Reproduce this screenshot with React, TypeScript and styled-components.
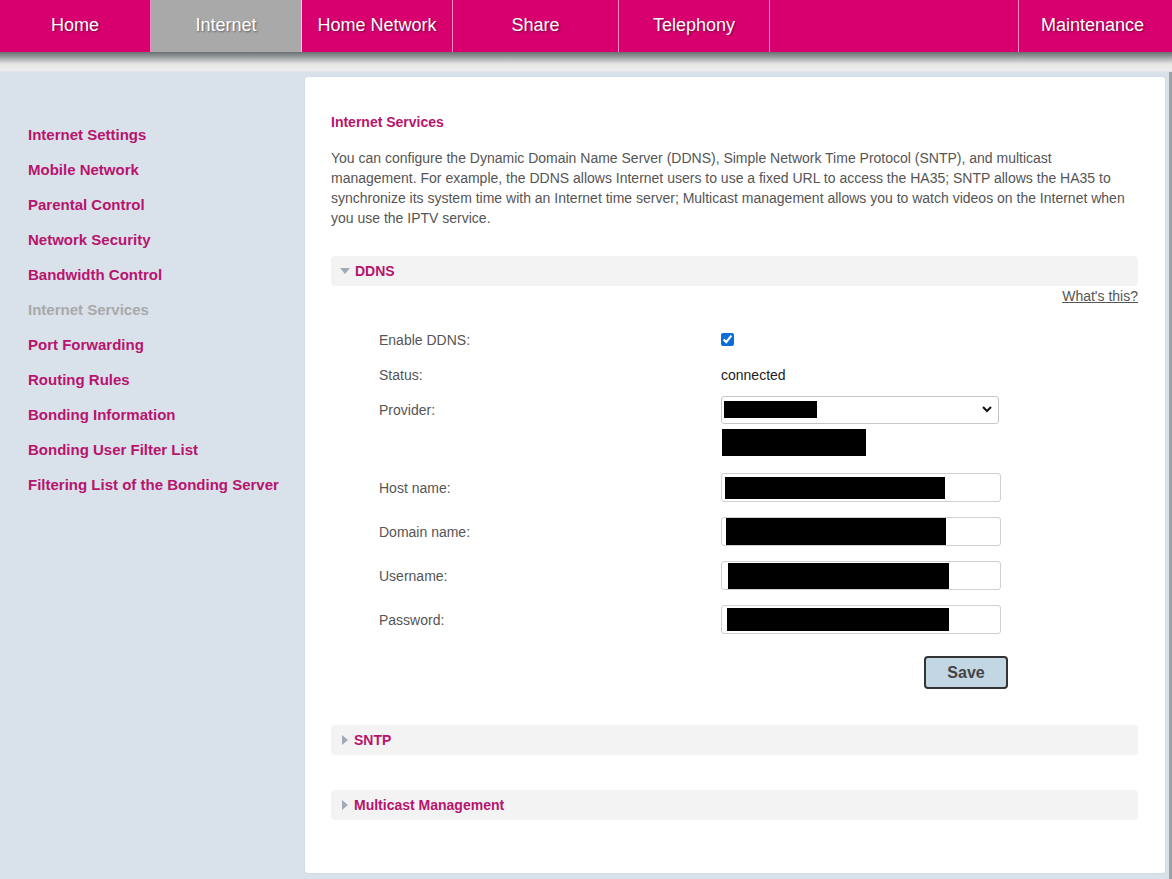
import React from "react";
import styled, { createGlobalStyle } from "styled-components";

const GlobalStyle = createGlobalStyle`
  html, body { margin: 0; padding: 0; }
  body {
    font-family: "Liberation Sans", Arial, sans-serif;
    background: #d9e1eb;
    width: 1172px;
    min-height: 879px;
    overflow: hidden;
  }
`;

const MAGENTA = "#d8006f";
const LINK = "#b8146d";

const Page = styled.div`
  width: 1172px;
  min-height: 879px;
  display: flex;
  flex-direction: column;
`;

const NavBar = styled.nav`
  display: flex;
  height: 52px;
  background: ${MAGENTA};
`;

const Tab = styled.div<{ $w?: number; $active?: boolean; $last?: boolean }>`
  ${(p) => (p.$w ? `width: ${p.$w}px;` : "flex: 1;")}
  flex-shrink: 0;
  display: flex;
  align-items: center;
  justify-content: center;
  color: #fff;
  font-size: 18px;
  text-shadow: 1px 1px 2px rgba(0, 0, 0, 0.45);
  background: ${(p) => (p.$active ? "#a9a9a9" : MAGENTA)};
  border-right: ${(p) => (p.$last ? "none" : "1px solid rgba(255,255,255,0.55)")};
  padding-bottom: 2px;
  padding-right: ${(p) => (p.$last ? 6 : 0)}px;
  box-sizing: border-box;
`;

const ShadowBand = styled.div`
  height: 20px;
  background: linear-gradient(
    #6a6f72 0px,
    #8f9497 4px,
    #c4c7c8 9px,
    #e6e6e6 12px,
    #ececec 18px,
    #dfe4ea 20px
  );
`;

const Body = styled.div`
  flex: 1;
  display: flex;
  border-right: 3px solid #9da2a8;
  padding: 5px 4px 6px 0;
`;

const Sidebar = styled.aside`
  width: 305px;
  flex-shrink: 0;
  padding: 40px 0 0 28px;
  box-sizing: border-box;
  display: flex;
  flex-direction: column;
`;

const SideLink = styled.a<{ $current?: boolean }>`
  font-size: 15px;
  font-weight: bold;
  line-height: 35px;
  color: ${(p) => (p.$current ? "#a9a9a9" : LINK)};
  text-decoration: none;
  white-space: nowrap;
`;

const Panel = styled.main`
  flex: 1;
  height: 796px;
  background: #fff;
  border-radius: 3px;
  box-shadow: 0 0 2px rgba(0, 0, 0, 0.08);
  padding: 37px 27px 0 26px;
  box-sizing: border-box;
  display: flex;
  flex-direction: column;
`;

const Title = styled.h1`
  margin: 0;
  font-size: 14px;
  line-height: 16px;
  font-weight: bold;
  color: ${LINK};
`;

const Intro = styled.p`
  margin: 18px 0 0;
  font-size: 14px;
  line-height: 20px;
  color: #555;
`;

const SectionBar = styled.div<{ $mt: number }>`
  margin-top: ${(p) => p.$mt}px;
  height: 30px;
  background: #f3f3f3;
  border-radius: 4px;
  display: flex;
  align-items: center;
  gap: 5px;
  padding-left: 9px;
  font-size: 14px;
  font-weight: bold;
  color: ${LINK};
`;

const Help = styled.a`
  align-self: flex-end;
  margin-top: 2px;
  font-size: 14px;
  line-height: 16px;
  color: #555;
  text-decoration: underline;
`;

const Form = styled.div`
  margin-top: 18px;
  display: flex;
  flex-direction: column;
`;

const Row = styled.div<{ $h: number; $mt?: number }>`
  display: grid;
  grid-template-columns: 342px 1fr;
  align-items: center;
  height: ${(p) => p.$h}px;
  margin-top: ${(p) => p.$mt || 0}px;
  padding-left: 48px;
  font-size: 14px;
  color: #555;
`;

const Label = styled.span`
  color: #555;
`;

const Value = styled.span`
  color: #222;
`;

const Check = styled.input`
  width: 13px;
  height: 13px;
  margin: 0;
  accent-color: #0b6ed8;
`;

const SelectBox = styled.div`
  width: 278px;
  height: 28px;
  border: 1px solid #c6c6c6;
  border-radius: 3px;
  box-sizing: border-box;
  display: flex;
  align-items: center;
  justify-content: space-between;
  padding: 0 6px 0 2px;
`;

const Redact = styled.span<{ $w: number; $h: number; $ml?: number }>`
  display: block;
  width: ${(p) => p.$w}px;
  height: ${(p) => p.$h}px;
  margin-left: ${(p) => p.$ml || 0}px;
  background: #000;
`;

const TextField = styled.div`
  width: 280px;
  height: 29px;
  border: 1px solid #cfcfcf;
  border-radius: 3px;
  box-sizing: border-box;
  display: flex;
  align-items: center;
`;

const ButtonCell = styled.div`
  width: 287px;
  display: flex;
  justify-content: flex-end;
`;

const SaveButton = styled.button`
  width: 84px;
  height: 33px;
  background: #c3d6e3;
  border: 2px solid #333;
  border-radius: 4px;
  font-family: "Liberation Sans", Arial, sans-serif;
  font-size: 16px;
  font-weight: bold;
  color: #444;
  padding: 0;
`;

const Caret = ({ open }: { open?: boolean }) =>
  open ? (
    <svg width="10" height="6" viewBox="0 0 10 6">
      <path d="M0 0 H10 L5 6 Z" fill="#9fabb6" />
    </svg>
  ) : (
    <svg width="6" height="10" viewBox="0 0 6 10" style={{ marginLeft: 2, marginRight: 1 }}>
      <path d="M0 0 V10 L6 5 Z" fill="#9fabb6" />
    </svg>
  );

const Chevron = () => (
  <svg width="10" height="7" viewBox="0 0 10 7">
    <path d="M1 1 L5 5 L9 1" fill="none" stroke="#111" strokeWidth="2" />
  </svg>
);

const tabs: { label: string; w?: number; active?: boolean }[] = [
  { label: "Home", w: 151 },
  { label: "Internet", w: 151, active: true },
  { label: "Home Network", w: 151 },
  { label: "Share", w: 166 },
  { label: "Telephony", w: 151 },
  { label: "" },
  { label: "Maintenance", w: 153 },
];

const links = [
  "Internet Settings",
  "Mobile Network",
  "Parental Control",
  "Network Security",
  "Bandwidth Control",
  "Internet Services",
  "Port Forwarding",
  "Routing Rules",
  "Bonding Information",
  "Bonding User Filter List",
  "Filtering List of the Bonding Server",
];

const fields: { label: string; w: number; h: number; ml: number }[] = [
  { label: "Host name:", w: 220, h: 22, ml: 3 },
  { label: "Domain name:", w: 220, h: 27, ml: 4 },
  { label: "Username:", w: 221, h: 26, ml: 6 },
  { label: "Password:", w: 222, h: 23, ml: 5 },
];

export default function App() {
  return (
    <Page>
      <GlobalStyle />
      <NavBar>
        {tabs.map((t, i) => (
          <Tab key={i} $w={t.w} $active={t.active} $last={i === tabs.length - 1}>
            {t.label}
          </Tab>
        ))}
      </NavBar>
      <ShadowBand />
      <Body>
        <Sidebar>
          {links.map((l) => (
            <SideLink key={l} $current={l === "Internet Services"}>
              {l}
            </SideLink>
          ))}
        </Sidebar>
        <Panel>
          <Title>Internet Services</Title>
          <Intro>
            You can configure the Dynamic Domain Name Server (DDNS), Simple Network Time Protocol (SNTP), and
            multicast management. For example, the DDNS allows Internet users to use a fixed URL to access the HA35;
            SNTP allows the HA35 to synchronize its system time with an Internet time server; Multicast management
            allows you to watch videos on the Internet when you use the IPTV service.
          </Intro>
          <SectionBar $mt={28}>
            <Caret open />
            DDNS
          </SectionBar>
          <Help>What's this?</Help>
          <Form>
            <Row $h={35}>
              <Label>Enable DDNS:</Label>
              <Check type="checkbox" defaultChecked />
            </Row>
            <Row $h={35}>
              <Label>Status:</Label>
              <Value>connected</Value>
            </Row>
            <Row $h={35}>
              <Label>Provider:</Label>
              <SelectBox>
                <Redact $w={93} $h={17} />
                <Chevron />
              </SelectBox>
            </Row>
            <Row $h={27} $mt={2}>
              <span />
              <Redact $w={144} $h={27} $ml={1} />
            </Row>
            {fields.map((f, i) => (
              <Row key={f.label} $h={29} $mt={i === 0 ? 17 : 15}>
                <Label>{f.label}</Label>
                <TextField>
                  <Redact $w={f.w} $h={f.h} $ml={f.ml} />
                </TextField>
              </Row>
            ))}
            <Row $h={33} $mt={22}>
              <span />
              <ButtonCell>
                <SaveButton>Save</SaveButton>
              </ButtonCell>
            </Row>
          </Form>
          <SectionBar $mt={36}>
            <Caret />
            SNTP
          </SectionBar>
          <SectionBar $mt={35}>
            <Caret />
            Multicast Management
          </SectionBar>
        </Panel>
      </Body>
    </Page>
  );
}
